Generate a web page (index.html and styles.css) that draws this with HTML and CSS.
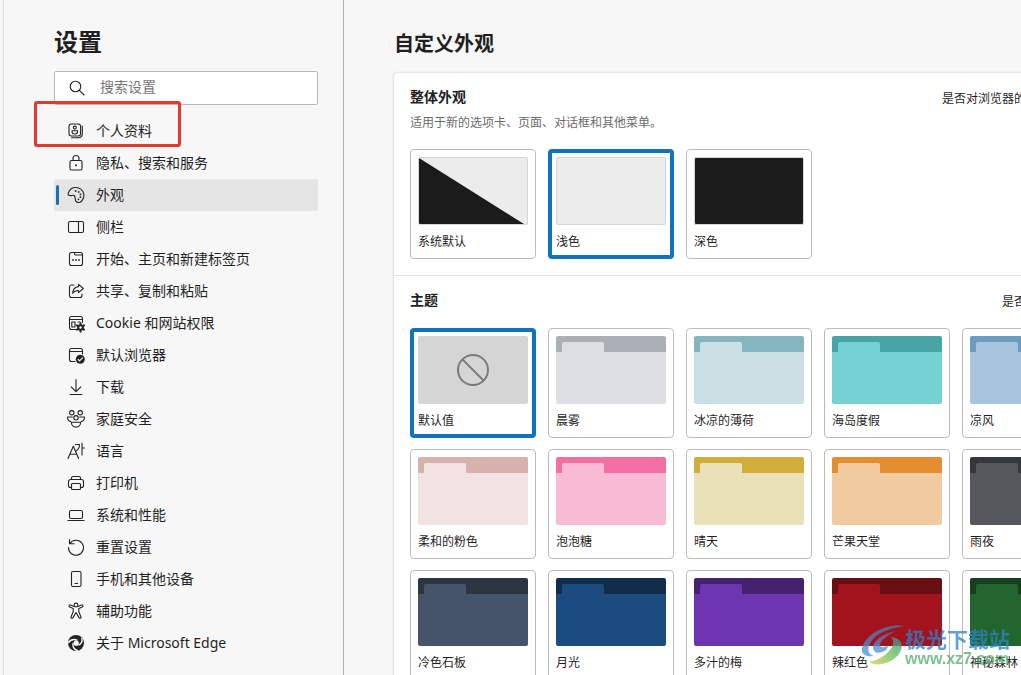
FILE: index.html
```html
<!DOCTYPE html>
<html lang="zh-CN">
<head>
<meta charset="utf-8">
<title>设置</title>
<link rel="stylesheet" href="styles.css">
</head>
<body>
<div class="app">
  <aside class="sidebar">
    <h1 class="sidebar-title">设置</h1>
    <label class="search">
      <svg class="icon" viewBox="0 0 20 20"><circle cx="8.5" cy="8.5" r="5.3"/><path d="M12.4 12.4 17 17"/></svg>
      <input class="search-input" type="text" placeholder="搜索设置" aria-label="搜索设置">
    </label>
    <nav class="nav">
      <a class="nav-item marked" href="#"><svg class="icon" viewBox="0 0 20 20"><rect x="3" y="3" width="11.6" height="12" rx="2.4"/><circle cx="8.8" cy="6.6" r="1.5"/><path d="M6 9.8h5.600v.8c0 1.600-1.200 2.400-2.800 2.400S6 12.200 6 10.600zM16.300 5v7.500c0 2.300-1.500 4.200-4 4.200H5.500"/></svg>个人资料</a>
      <a class="nav-item" href="#"><svg class="icon" viewBox="0 0 20 20"><rect x="4" y="7.500" width="12" height="9.500" rx="1.500"/><path d="M7 7.500V5.500a3 3 0 0 1 6 0v2"/><circle class="solid" cx="10" cy="12.200" r="1"/></svg>隐私、搜索和服务</a>
      <a class="nav-item active" href="#" aria-current="page"><svg class="icon" viewBox="0 0 20 20"><path d="M3 10.300C2 9.800 2 8.600 2.500 7.500 4 3.700 7.800 1.900 11.800 2.700c4.700 1 7.200 5.700 5.600 10.300-1.100 3-3.400 4.900-5.700 4.400-1.800-.4-2.500-1.800-2.500-3.700 0-2-.5-3.500-2-3.500-1.400 0-2.600.9-4.200.100z"/><g class="solid"><circle cx="9.600" cy="6" r=".9"/><circle cx="12.700" cy="6.900" r=".9"/><circle cx="14.500" cy="9.400" r=".9"/><circle cx="14.400" cy="12.200" r=".9"/><circle cx="12.400" cy="14.300" r=".9"/></g></svg>外观</a>
      <a class="nav-item" href="#"><svg class="icon" viewBox="0 0 20 20"><rect x="2.500" y="4.500" width="15" height="11" rx="1.500"/><path d="M12.500 4.500v11"/></svg>侧栏</a>
      <a class="nav-item" href="#"><svg class="icon" viewBox="0 0 20 20"><rect x="3.500" y="3.500" width="13" height="13" rx="2"/><path d="M8.500 3.500v1c0 1 .5 1.500 1.500 1.500h6.500"/><g class="solid"><circle cx="7" cy="11" r=".9"/><circle cx="10" cy="11" r=".9"/><circle cx="13" cy="11" r=".9"/></g></svg>开始、主页和新建标签页</a>
      <a class="nav-item" href="#"><svg class="icon" viewBox="0 0 20 20"><path d="M8 4H5.500a2 2 0 0 0-2 2v8.500a2 2 0 0 0 2 2H14a2 2 0 0 0 2-2V13"/><path d="M12.500 3.300 17.300 7.500l-4.800 4.200V9.500C9.800 9.500 8 10.300 6.600 12.300 6.900 8.600 9 5.900 12.500 5.600z"/></svg>共享、复制和粘贴</a>
      <a class="nav-item" href="#"><svg class="icon" viewBox="0 0 20 20"><path d="M9.500 16.500h-4a2 2 0 0 1-2-2v-9a2 2 0 0 1 2-2h9a2 2 0 0 1 2 2v4M3.500 6.500h13M12 9h2"/><rect x="5.800" y="9" width="3.200" height="5"/><path class="gear" d="M14.500 10.300v8.400M10.900 12.400l7.200 4.200M10.900 16.600l7.200-4.200"/><circle class="solid" cx="14.500" cy="14.500" r="3.300"/><circle class="paper" cx="14.500" cy="14.500" r="1.200"/></svg>Cookie 和网站权限</a>
      <a class="nav-item" href="#"><svg class="icon" viewBox="0 0 20 20"><path d="M9 16.500H5.500a2 2 0 0 1-2-2v-9a2 2 0 0 1 2-2h9a2 2 0 0 1 2 2V9M3.500 6.500h13"/><circle class="solid" cx="14.300" cy="14.300" r="4.500"/><path class="knock" d="m12.200 14.500 1.400 1.400 2.900-3"/></svg>默认浏览器</a>
      <a class="nav-item" href="#"><svg class="icon" viewBox="0 0 20 20"><path d="M10 2.500v12M5.200 9.800l4.800 4.800 4.800-4.800M4 17.500h12"/></svg>下载</a>
      <a class="nav-item" href="#"><svg class="icon" viewBox="0 0 20 20"><circle cx="5.800" cy="3.800" r="2.200"/><circle cx="14.200" cy="3.800" r="2.200"/><circle cx="10" cy="8.800" r="2.200"/><path d="M5.500 13.300h9v.8c0 2.200-2 4-4.500 4s-4.500-1.800-4.500-4zM6.300 8H1.500c0 2.600 1.200 4.100 3.400 4.700M13.700 8h4.800c0 2.600-1.200 4.100-3.400 4.700"/></svg>家庭安全</a>
      <a class="nav-item" href="#"><svg class="icon" viewBox="0 0 20 20"><path d="M2 17.500 7.300 5.200l5.300 12.300M4 13.300h6.800M9.500 3.500h4c0 3-1 5-3.200 6.300M16 2v12M16 7h2.500"/></svg>语言</a>
      <a class="nav-item" href="#"><svg class="icon" viewBox="0 0 20 20"><path d="M5.500 14.500h-1a2 2 0 0 1-2-2V8.500a2 2 0 0 1 2-2h11a2 2 0 0 1 2 2v4a2 2 0 0 1-2 2h-1M5.500 6.500V5a1.500 1.500 0 0 1 1.500-1.500h6A1.500 1.500 0 0 1 14.500 5v1.500"/><rect x="5.500" y="10.500" width="9" height="6" rx="1"/></svg>打印机</a>
      <a class="nav-item" href="#"><svg class="icon" viewBox="0 0 20 20"><rect x="3.500" y="5.500" width="13" height="8" rx="1.500"/><path d="M2 15.500h16"/></svg>系统和性能</a>
      <a class="nav-item" href="#"><svg class="icon" viewBox="0 0 20 20"><path d="M3.500 2.500v4.300H8M3.800 6.500A7.500 7.500 0 1 1 2.500 10.500"/></svg>重置设置</a>
      <a class="nav-item" href="#"><svg class="icon" viewBox="0 0 20 20"><rect x="5.500" y="2.500" width="9.500" height="15" rx="1.500"/><path d="M9 14.500h2.500"/></svg>手机和其他设备</a>
      <a class="nav-item" href="#"><svg class="icon" viewBox="0 0 20 20"><circle cx="10" cy="4" r="1.900"/><path d="M8.200 5.500 4.600 4.100C3.100 3.500 2.500 5.500 3.700 6L7.200 7.600v3.200l-2.100 5c-.6 1.500 1.300 2.200 1.900.8L10 11.500l3 5.100c.6 1.400 2.500.7 1.900-.8l-2.100-5V7.600L16.300 6c1.200-.5.6-2.500-.9-1.900l-3.600 1.400"/></svg>辅助功能</a>
      <a class="nav-item" href="#"><svg class="icon" viewBox="0 0 20 20"><circle class="solid" cx="10" cy="10" r="8"/><path class="knock wide" d="M2.500 9.500C4.500 6.800 8 6 11 7.100M15.800 5.400c.8 3-.4 5.200-2.800 6.500M11.300 17.500C8 16.200 6.500 13.600 7 10.500"/><circle class="paper" cx="10.200" cy="10.200" r="2.600"/></svg>关于 Microsoft Edge</a>
    </nav>
  </aside>
  <main class="main">
    <h2 class="page-title">自定义外观</h2>
    <div class="panel">
      <section class="section">
        <header class="section-head"><h3 class="section-title">整体外观</h3><span class="feedback">是否对浏览器的</span></header>
        <p class="section-desc">适用于新的选项卡、页面、对话框和其他菜单。</p>
        <div class="cards">
          <button class="card"><span class="mode mode-system"></span><span class="card-name">系统默认</span></button>
          <button class="card selected" aria-pressed="true"><span class="mode"></span><span class="card-name">浅色</span></button>
          <button class="card"><span class="mode mode-dark"></span><span class="card-name">深色</span></button>
        </div>
      </section>
      <section class="section">
        <header class="section-head"><h3 class="section-title">主题</h3><span class="feedback">是否</span></header>
        <div class="cards">
          <button class="card selected" aria-pressed="true"><span class="none"><svg class="none-icon" viewBox="0 0 34 34"><circle cx="17" cy="17" r="15"/><path d="m6.500 6.500 21 21"/></svg></span><span class="card-name">默认值</span></button>
          <button class="card"><span class="swatch mist"></span><span class="card-name">晨雾</span></button>
          <button class="card"><span class="swatch mint"></span><span class="card-name">冰凉的薄荷</span></button>
          <button class="card"><span class="swatch island"></span><span class="card-name">海岛度假</span></button>
          <button class="card"><span class="swatch breeze"></span><span class="card-name">凉风</span></button>
          <button class="card"><span class="swatch pink"></span><span class="card-name">柔和的粉色</span></button>
          <button class="card"><span class="swatch bubble"></span><span class="card-name">泡泡糖</span></button>
          <button class="card"><span class="swatch sunny"></span><span class="card-name">晴天</span></button>
          <button class="card"><span class="swatch mango"></span><span class="card-name">芒果天堂</span></button>
          <button class="card"><span class="swatch rain"></span><span class="card-name">雨夜</span></button>
          <button class="card"><span class="swatch slate"></span><span class="card-name">冷色石板</span></button>
          <button class="card"><span class="swatch moon"></span><span class="card-name">月光</span></button>
          <button class="card"><span class="swatch plum"></span><span class="card-name">多汁的梅</span></button>
          <button class="card"><span class="swatch chili"></span><span class="card-name">辣红色</span></button>
          <button class="card"><span class="swatch forest"></span><span class="card-name">神秘森林</span></button>
        </div>
      </section>
    </div>
  </main>
</div>
<div class="watermark">
  <svg class="watermark-logo" viewBox="0 0 42 42">
    <defs>
      <linearGradient id="wave-blue" x1="0" y1="1" x2="1" y2="0"><stop offset="0" stop-color="#3f9ad6"/><stop offset=".6" stop-color="#5e78b8"/><stop offset="1" stop-color="#3a8cc8"/></linearGradient>
      <linearGradient id="wave-green" x1="0" y1="1" x2="1" y2="0"><stop offset="0" stop-color="#d6d24a"/><stop offset=".6" stop-color="#5cb85a"/><stop offset="1" stop-color="#3f8fb0"/></linearGradient>
    </defs>
    <path fill="url(#wave-blue)" d="M42 1C24-2 4 9 0 23c-1 6 3 9 12 8C4 29 5 20 12 13 19 6 30 3 42 1z"/>
    <path fill="url(#wave-blue)" d="M34 6C21 9 12 15 11 22c0 5 4 7 9 5 4-1 6-4 6-7-3 3-8 3-8 0 0-4 6-9 16-14z"/>
    <path fill="url(#wave-green)" d="M28 12c5 2 4 9-1 14-5 6-12 9-20 11 5 4 17 3 25-3 10-8 12-21-4-22z"/>
  </svg>
  <div class="watermark-text"><span class="watermark-name">极光下载站</span><span class="watermark-url">www.xz7.com</span></div>
</div>
</body>
</html>
```
FILE: styles.css
```css
*, *::before, *::after { box-sizing: border-box; }

body {
  margin: 0;
  overflow: hidden;
  background: #f7f7f7;
  color: #1f1f1f;
  font-family: "Noto Sans", "Noto Sans CJK SC", sans-serif;
  font-size: 14px;
}

h1, h2, h3, p { margin: 0; }

.app {
  display: flex;
  height: 100vh;
  padding-left: 3px;
}

.sidebar {
  flex: none;
  width: 341px;
  padding: 24px 25px 0 50px;
  border-left: 1px solid #e0e0e0;
  border-right: 1px solid #b4b4b4;
}

.sidebar-title {
  font-size: 24px;
  line-height: 36px;
}

.search {
  display: flex;
  align-items: center;
  gap: 13px;
  height: 34px;
  margin-top: 11px;
  padding: 0 12px;
  background: #fff;
  border: 1px solid #b8b8b8;
  border-radius: 2px;
}

.search-input {
  flex: 1;
  min-width: 0;
  padding: 0 0 4px;
  border: 0;
  outline: 0;
  background: none;
  font: inherit;
}

.search-input::placeholder { color: #767676; }

.nav { margin-top: 10px; }

.nav-item {
  position: relative;
  display: flex;
  align-items: center;
  gap: 10px;
  height: 32px;
  padding: 0 0 2px 12px;
  border-radius: 2px;
  color: inherit;
  text-decoration: none;
  white-space: nowrap;
}

.nav-item .icon { margin-top: 2px; }

.active { background: #e5e5e5; }

.active::before {
  content: "";
  position: absolute;
  left: 2px;
  top: 6px;
  width: 3px;
  height: 20px;
  border-radius: 2px;
  background: #1a6fb5;
}

.marked::after {
  content: "";
  position: absolute;
  left: -20px;
  top: -14px;
  width: 147px;
  height: 46px;
  border: 3px solid #e23a2e;
  border-radius: 3px;
}

.icon {
  flex: none;
  width: 20px;
  height: 20px;
  fill: none;
  stroke: #242424;
  stroke-width: 1.1;
  stroke-linecap: round;
  stroke-linejoin: round;
}

.icon .solid { fill: #242424; stroke: none; }
.icon .paper { fill: #f7f7f7; stroke: none; }
.icon .gear { stroke-width: 2; }
.icon .knock { stroke: #f7f7f7; }
.icon .wide { stroke-width: 1.4; }

.main {
  flex: 1;
  min-width: 0;
  padding: 29px 0 0 50px;
}

.page-title {
  font-size: 20px;
  line-height: 30px;
}

.panel {
  min-width: 648px;
  min-height: 100vh;
  margin-top: 14px;
  background: #fff;
  border-radius: 4px;
  box-shadow: 0 0 3px rgba(0, 0, 0, 0.2);
}

.section { padding: 14px 16px 16px; }
.section + .section { border-top: 1px solid #e5e5e5; }

.section-head {
  display: flex;
  align-items: flex-start;
  justify-content: space-between;
  height: 20px;
}

.section-title {
  font-size: 14px;
  line-height: 20px;
}

.feedback {
  font-size: 12px;
  line-height: 24px;
}

.section-desc {
  margin-top: 8px;
  color: #6b6b6b;
  font-size: 12px;
  line-height: 16px;
}

.cards {
  display: grid;
  grid-template-columns: repeat(5, 126px);
  gap: 11px 12px;
  margin-top: 18px;
}

.card {
  display: flex;
  flex-direction: column;
  gap: 9px;
  padding: 7px 7px 8px;
  background: #fff;
  border: 1px solid #bcbcbc;
  border-radius: 4px;
  color: inherit;
  font: inherit;
  text-align: left;
}

.selected {
  padding: 4px 4px 5px;
  border: 4px solid #1073c0;
}

.card-name {
  font-size: 12px;
  line-height: 16px;
}

.mode, .none, .swatch {
  display: block;
  width: 110px;
  height: 68px;
  border-radius: 2px;
  overflow: hidden;
}

.mode { border: 1px solid #d6d6d6; background: #ececec; }
.mode-dark { background: #1b1b1b; }
.mode-system::before {
  content: "";
  display: block;
  height: 100%;
  background: #1b1b1b;
  clip-path: polygon(0 0, 105px 100%, 0 100%);
}

.none {
  display: grid;
  place-items: center;
  background: #d5d5d5;
}

.none-icon {
  width: 34px;
  height: 34px;
  fill: none;
  stroke: #7b7b7b;
  stroke-width: 2;
}

.swatch {
  padding: 6px 6px 0;
  background: linear-gradient(var(--frame) 16px, var(--page) 16px);
}

.swatch::before {
  content: "";
  display: block;
  width: 42px;
  height: 10px;
  border-radius: 2px 2px 0 0;
  background: var(--page);
}

.mist { --frame: #abb0b6; --page: #dddfe3; }
.mint { --frame: #85b5bf; --page: #cbe0e4; }
.island { --frame: #47a5a6; --page: #74d2d3; }
.breeze { --frame: #6a9dc1; --page: #a7c5dc; }
.pink { --frame: #d6b1ae; --page: #f1e3e2; }
.bubble { --frame: #f16fa3; --page: #f9bbd3; }
.sunny { --frame: #d1ad3c; --page: #ebe1b8; }
.mango { --frame: #e48e2f; --page: #f0cb9f; }
.rain { --frame: #36373b; --page: #56575d; }
.slate { --frame: #2c3642; --page: #455469; }
.moon { --frame: #102e4b; --page: #1c4b7f; }
.plum { --frame: #45216f; --page: #6d36b0; }
.chili { --frame: #690e13; --page: #a2131e; }
.forest { --frame: #173f1f; --page: #22652e; }

.watermark {
  position: fixed;
  right: 11px;
  bottom: 8px;
  display: flex;
  align-items: flex-end;
  gap: 1px;
  opacity: 0.75;
  pointer-events: none;
}

.watermark-logo { width: 42px; height: 42px; }

.watermark-text {
  display: flex;
  flex-direction: column;
  font-weight: bold;
}

.watermark-name {
  color: #2d84c8;
  font-size: 21px;
  line-height: 24px;
}

.watermark-url {
  color: #4fae6a;
  font-family: "Liberation Sans", sans-serif;
  font-size: 16px;
  line-height: 16px;
}
```
